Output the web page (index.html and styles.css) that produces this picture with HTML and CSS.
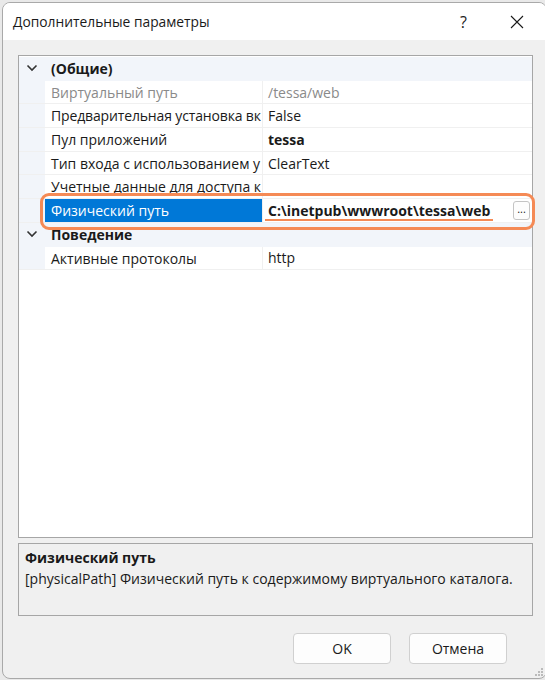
FILE: index.html
```html
<!DOCTYPE html>
<html lang="ru">
<head>
    <meta charset="utf-8">
    <title>Дополнительные параметры</title>
    <link rel="stylesheet" href="styles.css">
</head>
<body>
    <div class="dialog">
        <div class="titlebar">
            <span class="title">Дополнительные параметры</span>
            <span class="help">?</span>
            <span class="close">
                <svg width="14" height="14" viewBox="0 0 14 14"><path d="M1 1L13 13M13 1L1 13" stroke="#1a1a1a" stroke-width="1.1" fill="none"/></svg>
            </span>
        </div>
        <div class="content">
            <div class="grid">
                <div class="row category">
                    <span class="toggle"><svg width="12" height="8" viewBox="0 0 12 8"><path d="M1.5 1.5L6 6L10.5 1.5" stroke="#333" stroke-width="1.6" fill="none"/></svg></span>
                    <span class="cat-name">(Общие)</span>
                </div>
                <div class="row">
                    <span class="gutter"></span>
                    <span class="name muted">Виртуальный путь</span>
                    <span class="value muted">/tessa/web</span>
                </div>
                <div class="row">
                    <span class="gutter"></span>
                    <span class="name tight">Предварительная установка вк</span>
                    <span class="value">False</span>
                </div>
                <div class="row">
                    <span class="gutter"></span>
                    <span class="name">Пул приложений</span>
                    <span class="value bold">tessa</span>
                </div>
                <div class="row">
                    <span class="gutter"></span>
                    <span class="name">Тип входа с использованием у</span>
                    <span class="value">ClearText</span>
                </div>
                <div class="row">
                    <span class="gutter"></span>
                    <span class="name">Учетные данные для доступа к</span>
                    <span class="value"></span>
                </div>
                <div class="row selected">
                    <span class="gutter"></span>
                    <span class="name">Физический путь</span>
                    <span class="value bold">C:\inetpub\wwwroot\tessa\web<span class="underline"></span></span>
                    <span class="dots">...</span>
                    <span class="mark"></span>
                </div>
                <div class="row category">
                    <span class="toggle"><svg width="12" height="8" viewBox="0 0 12 8"><path d="M1.5 1.5L6 6L10.5 1.5" stroke="#333" stroke-width="1.6" fill="none"/></svg></span>
                    <span class="cat-name">Поведение</span>
                </div>
                <div class="row">
                    <span class="gutter"></span>
                    <span class="name">Активные протоколы</span>
                    <span class="value">http</span>
                </div>
            </div>
            <div class="description">
                <div class="desc-title">Физический путь</div>
                <div class="desc-text">[physicalPath] Физический путь к содержимому виртуального каталога.</div>
            </div>
            <div class="buttons">
                <button class="btn">OK</button>
                <button class="btn">Отмена</button>
            </div>
        </div>
        <svg class="grip" width="10" height="10" viewBox="0 0 10 10">
            <rect x="7" y="1" width="2" height="2" fill="#bbb"/>
            <rect x="4" y="4" width="2" height="2" fill="#bbb"/>
            <rect x="7" y="4" width="2" height="2" fill="#bbb"/>
            <rect x="1" y="7" width="2" height="2" fill="#bbb"/>
            <rect x="4" y="7" width="2" height="2" fill="#bbb"/>
            <rect x="7" y="7" width="2" height="2" fill="#bbb"/>
        </svg>
    </div>
</body>
</html>
```

FILE: styles.css
```css
* {
    box-sizing: border-box;
}
body {
    margin: 0;
    background: #e9e9e9;
    font-family: "Open Sans", "Noto Sans", Arial, sans-serif;
    font-size: 14px;
    color: #1a1a1a;
    height: 680px;
    overflow: hidden;
}
.dialog {
    position: relative;
    margin: 2px 0 0 2px;
    width: 545px;
    height: 677px;
    background: #f0f0f0;
    border: 1px solid #a9a9a9;
    border-radius: 8px;
    overflow: hidden;
    display: flex;
    flex-direction: column;
}
.titlebar {
    height: 37px;
    background: #fff;
    display: flex;
    align-items: center;
    padding-left: 10px;
}
.title {
    font-size: 13.8px;
    flex: 1;
}
.help {
    font-size: 16px;
    width: 50px;
    color: #222;
}
.close {
    width: 36px;
    display: flex;
    align-items: center;
}
.content {
    padding: 15px 13px 0 15px;
    display: flex;
    flex-direction: column;
}
.grid {
    height: 483px;
    background: #fff;
    border: 1px solid #a6a6a6;
    padding-top: 1px;
}
.row {
    position: relative;
    display: flex;
    height: 23.7px;
    align-items: center;
    border-bottom: 1px solid #f0f0f0;
    background: #fff;
}
.row.category {
    background: #f2f5fa;
    border-bottom: 1px solid #f2f5fa;
}
.toggle {
    width: 26px;
    display: flex;
    justify-content: center;
}
.cat-name {
    font-weight: bold;
    padding-left: 6px;
}
.gutter {
    width: 26px;
    height: 100%;
    background: #f2f5fa;
}
.name {
    width: 218px;
    height: 100%;
    line-height: 23px;
    padding-left: 6px;
    white-space: nowrap;
    overflow: hidden;
    border-right: 1px solid #f0f0f0;
}
.name.tight {
    letter-spacing: -0.15px;
}
.value {
    position: relative;
    padding-left: 5px;
    line-height: 23px;
    white-space: nowrap;
}
.muted {
    color: #8a8a8a;
}
.bold {
    font-weight: bold;
}
.selected .name {
    background: #0078d7;
    color: #fff;
}
.dots {
    position: absolute;
    right: 2px;
    top: 2px;
    width: 17px;
    height: 19px;
    border: 1px solid #c4c4c4;
    border-radius: 3px;
    background: #fdfdfd;
    font-size: 11px;
    line-height: 14px;
    text-align: center;
}
.underline {
    position: absolute;
    left: 2px;
    right: -3px;
    bottom: 1px;
    height: 2px;
    background: #f58a55;
}
.mark {
    position: absolute;
    z-index: 2;
    left: 21px;
    right: -3px;
    top: -6px;
    bottom: -8px;
    border: 3.5px solid #f58a55;
    border-radius: 9px;
}
.description {
    margin-top: 5px;
    height: 73px;
    border: 1px solid #a6a6a6;
    padding: 4px 6px;
}
.desc-title {
    font-weight: bold;
    line-height: 20px;
}
.desc-text {
    line-height: 22px;
}
.buttons {
    display: flex;
    justify-content: flex-end;
    gap: 18px;
    padding: 17px 26px 0 0;
}
.btn {
    width: 98px;
    height: 31px;
    background: #fdfdfd;
    border: 1px solid #d0d0d0;
    border-radius: 4px;
    font-family: "Open Sans", "Noto Sans", Arial, sans-serif;
    font-size: 14px;
    color: #1a1a1a;
}
.grip {
    position: absolute;
    right: 2px;
    bottom: 1px;
}
```
